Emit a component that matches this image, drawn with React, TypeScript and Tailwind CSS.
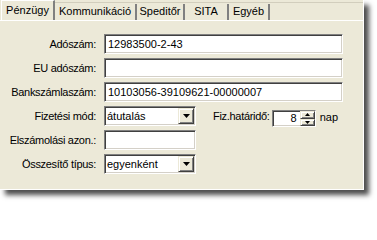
import React from "react";

const sunken =
  "border border-t-[#808080] border-l-[#808080] border-b-white border-r-white shadow-[inset_1px_1px_0_#404040,inset_-1px_-1px_0_#d4d0c8] bg-white";
const raised =
  "border border-t-[#ece9d8] border-l-[#ece9d8] border-b-[#404040] border-r-[#404040] shadow-[inset_1px_1px_0_#ffffff,inset_-1px_-1px_0_#808080] bg-[#ece9d8]";

function Label({ children }: { children: React.ReactNode }) {
  return (
    <div className="w-[96px] shrink-0 text-right tracking-[-0.3px] leading-none whitespace-nowrap">
      {children}
    </div>
  );
}

function Arrow() {
  return (
    <svg width="7" height="4" viewBox="0 0 7 4">
      <path d="M0 0h7L3.5 4z" fill="#000" />
    </svg>
  );
}

function Select({ value }: { value: string }) {
  return (
    <div className={`${sunken} w-[92px] h-[20px] flex items-center pl-[2px] pr-[1px]`}>
      <span className="flex-1 leading-none">{value}</span>
      <div className={`${raised} w-[16px] h-[16px] flex items-center justify-center`}>
        <Arrow />
      </div>
    </div>
  );
}

function Row({ children }: { children: React.ReactNode }) {
  return <div className="flex items-center h-[20px]">{children}</div>;
}

export default function App() {
  const tabs: { label: string; w: string }[] = [
    { label: "Kommunikáció", w: "w-[82px]" },
    { label: "Speditőr", w: "w-[48px]" },
    { label: "SITA", w: "w-[44px]" },
    { label: "Egyéb", w: "w-[41px]" },
  ];
  return (
    <div className="w-[377px] h-[203px] bg-white font-['Liberation_Sans',Arial,sans-serif] text-[11px] text-black">
      <div className="w-[364px] h-[190px] bg-[#ece9d8] border-r border-b border-white shadow-[5px_5px_5px_rgba(0,0,0,0.7)] flex flex-col">
        {/* tab strip */}
        <div className="h-[21px] flex border-b border-white">
          <div className="ml-[1px] w-[54px] flex items-center justify-center border-t border-l border-white border-r-2 border-r-[#808080] pb-[1px]">
            Pénzügy
          </div>
          <div className="flex flex-1 mt-[2px] border-t border-[#d2cebd]">
            {tabs.map((t) => (
              <div
                key={t.label}
                className={`${t.w} flex items-center justify-center border-r-2 border-r-[#808080] pb-[2px] mt-[1px]`}
              >
                {t.label}
              </div>
            ))}
          </div>
        </div>

        {/* form */}
        <div className="flex flex-col gap-[4px] pt-[13px]">
          <Row>
            <Label>Adószám:</Label>
            <div className={`${sunken} ml-[8px] w-[239px] h-[20px] flex items-center pl-[3px]`}>
              12983500-2-43
            </div>
          </Row>
          <Row>
            <Label>EU adószám:</Label>
            <div className={`${sunken} ml-[8px] w-[239px] h-[20px]`} />
          </Row>
          <Row>
            <Label>Bankszámlaszám:</Label>
            <div className={`${sunken} ml-[8px] w-[239px] h-[20px] flex items-center pl-[3px]`}>
              10103056-39109621-00000007
            </div>
          </Row>
          <Row>
            <Label>Fizetési mód:</Label>
            <div className="ml-[8px]">
              <Select value="átutalás" />
            </div>
            <div className="ml-[17px] tracking-[-0.3px] whitespace-nowrap leading-none">Fiz.határidő:</div>
            <div className={`${sunken} ml-[2px] mt-[4px] w-[44px] h-[17px] flex items-center`}>
              <span className="flex-1 text-right pr-[3px] leading-none">8</span>
              <div className="w-[15px] h-[15px] flex flex-col">
                <div className={`${raised} h-[8px] flex items-center justify-center`}>
                  <svg width="5" height="3" viewBox="0 0 5 3">
                    <path d="M2.5 0L5 3H0z" fill="#000" />
                  </svg>
                </div>
                <div className={`${raised} h-[7px] flex items-center justify-center`}>
                  <svg width="5" height="3" viewBox="0 0 5 3">
                    <path d="M0 0h5L2.5 3z" fill="#000" />
                  </svg>
                </div>
              </div>
            </div>
            <div className="ml-[4px] mt-[2px] leading-none">nap</div>
          </Row>
          <Row>
            <Label>Elszámolási azon.:</Label>
            <div className={`${sunken} ml-[8px] w-[92px] h-[20px]`} />
          </Row>
          <Row>
            <Label>Összesítő típus:</Label>
            <div className="ml-[8px]">
              <Select value="egyenként" />
            </div>
          </Row>
        </div>
      </div>
    </div>
  );
}
